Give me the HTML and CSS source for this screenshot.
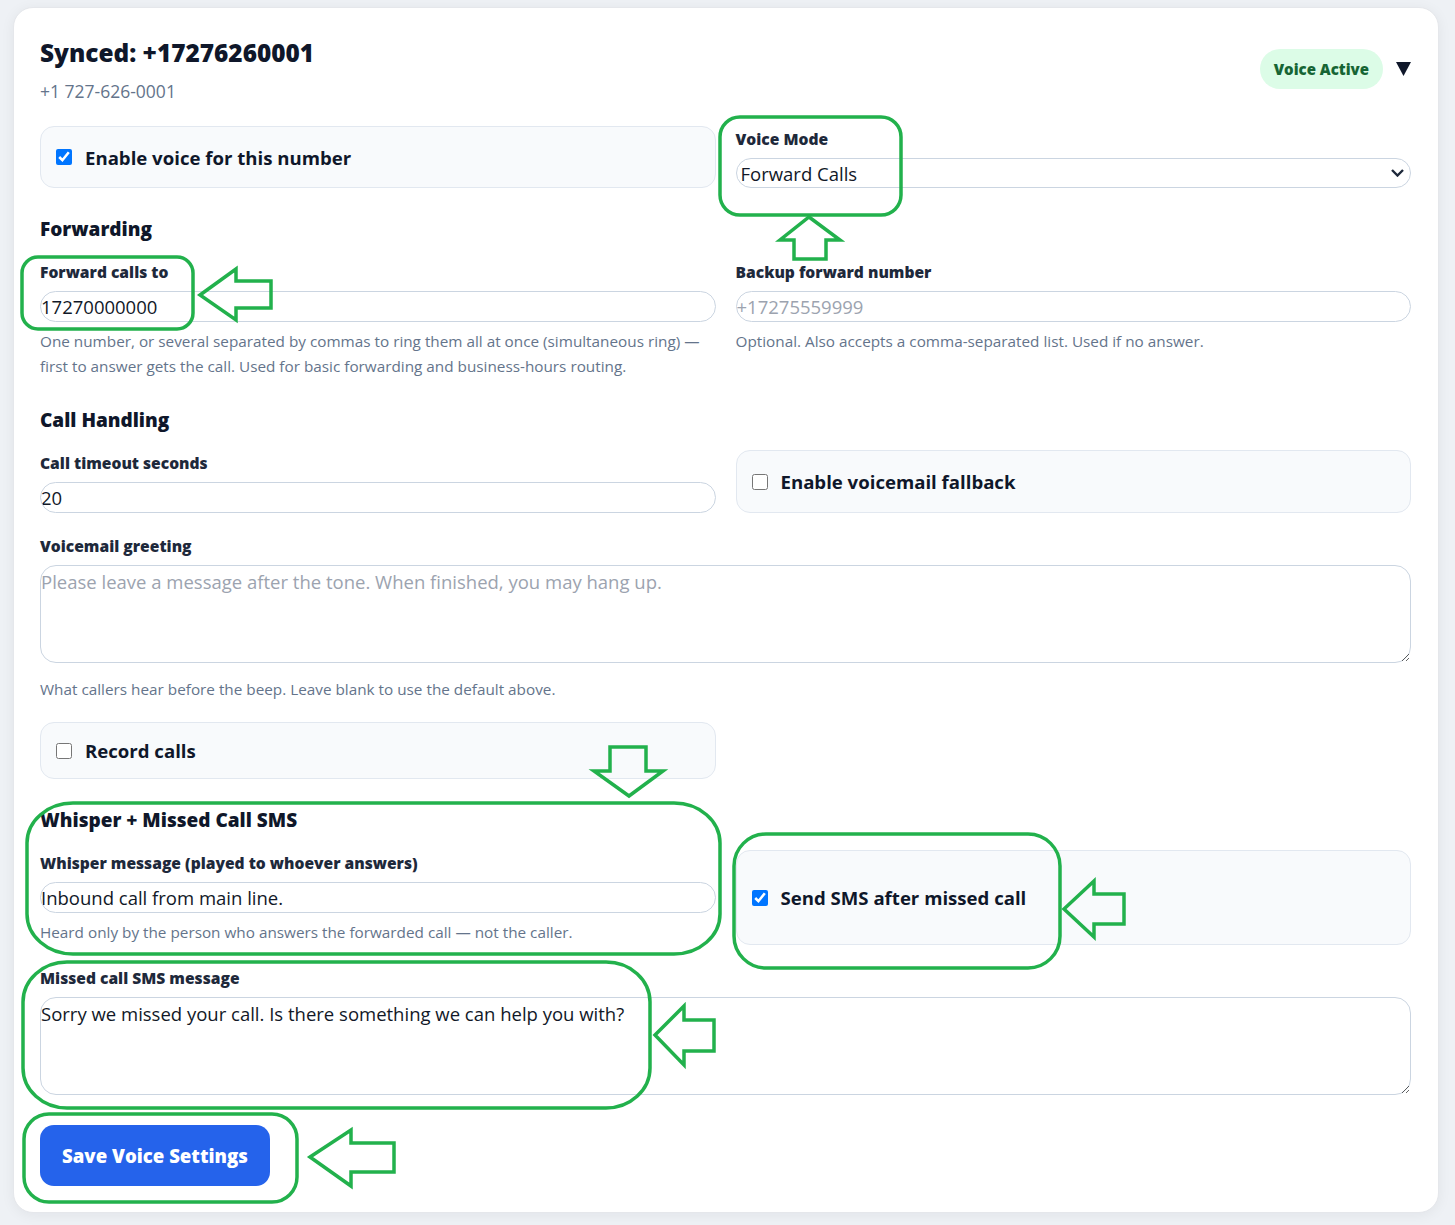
FILE: index.html
```html
<!DOCTYPE html>
<html lang="en"><head>
  <meta charset="utf-8">
  <title>Voice settings</title>
  <link rel="stylesheet" href="styles.css">
</head>
<body>

<div class="card">
  <div class="head">
    <div>
      <h2>Synced: +17276260001</h2>
      <div class="sub">+1 727-626-0001</div>
    </div>
    <div class="status">
      <span class="badge">Voice Active</span>
      <svg class="caret" width="15" height="14" viewBox="0 0 15 14"><polygon points="0,0 15,0 7.5,14"/></svg>
    </div>
  </div>

  <section class="sec first">
    <div class="row">
      <label class="check"><input type="checkbox" checked> Enable voice for this number</label>
      <div class="field">
        <label>Voice Mode</label>
        <div class="select">
          <select><option>Forward Calls</option><option>Voicemail Only</option></select>
          <svg width="13" height="8" viewBox="0 0 13 8"><polyline points="1,1 6.5,6.5 12,1"/></svg>
        </div>
      </div>
    </div>
  </section>

  <h3>Forwarding</h3>
  <section class="sec">
    <div class="row">
      <div class="field">
        <label>Forward calls to</label>
        <input type="text" value="17270000000">
        <p class="help">One number, or several separated by commas to ring them all at once (simultaneous ring) — first to answer gets the call. Used for basic forwarding and business-hours routing.</p>
      </div>
      <div class="field">
        <label>Backup forward number</label>
        <input type="text" placeholder="+17275559999">
        <p class="help">Optional. Also accepts a comma-separated list. Used if no answer.</p>
      </div>
    </div>
  </section>

  <h3>Call Handling</h3>
  <section class="sec">
    <div class="row">
      <div class="field">
        <label>Call timeout seconds</label>
        <input type="text" value="20">
      </div>
      <label class="check"><input type="checkbox"> Enable voicemail fallback</label>
    </div>
    <div class="field">
      <label>Voicemail greeting</label>
      <textarea placeholder="Please leave a message after the tone. When finished, you may hang up."></textarea>
      <p class="help">What callers hear before the beep. Leave blank to use the default above.</p>
    </div>
    <div class="row">
      <label class="check"><input type="checkbox"> Record calls</label>
    </div>
  </section>

  <h3>Whisper + Missed Call SMS</h3>
  <section class="sec">
    <div class="row">
      <div class="field">
        <label>Whisper message (played to whoever answers)</label>
        <input type="text" value="Inbound call from main line.">
        <p class="help">Heard only by the person who answers the forwarded call — not the caller.</p>
      </div>
      <label class="check"><input type="checkbox" checked> Send SMS after missed call</label>
    </div>
    <div class="field">
      <label>Missed call SMS message</label>
      <textarea>Sorry we missed your call. Is there something we can help you with?</textarea>
    </div>
  </section>

  <div class="actions">
    <button type="button" class="save">Save Voice Settings</button>
  </div>
</div>

<!-- review marks drawn over the page -->
<svg class="marks" width="1455" height="1225" viewBox="0 0 1455 1225">
  <rect x="720" y="117" width="181" height="98" rx="20"/>
  <polygon points="809,217 840,240 826,240 826,259 794,259 794,240 780,240"/>
  <rect x="22" y="257" width="171" height="72" rx="16"/>
  <polygon points="200,295 236,269 236,281 271,281 271,308 236,308 236,320"/>
  <polygon points="610,747 646,747 646,771 663,771 629,796 594,771 610,771"/>
  <rect x="27" y="803" width="693" height="151" rx="46" ry="40"/>
  <rect x="734" y="834" width="326" height="134" rx="32"/>
  <polygon points="1064,909 1094,881 1094,894 1124,894 1124,924 1094,924 1094,937"/>
  <rect x="23" y="962" width="627" height="146" rx="44" ry="40"/>
  <polygon points="655,1035 684,1006 684,1020 714,1020 714,1051 684,1051 684,1065"/>
  <rect x="24" y="1114" width="273" height="88" rx="25"/>
  <polygon points="310,1157 351,1130 351,1143 394,1143 394,1172 351,1172 351,1186"/>
</svg>

</body></html>
```

FILE: styles.css
```css
* { box-sizing: border-box; }

html, body { margin: 0; }

body {
  background: #eef1f5;
  color: #0f172a;
  font-family: "Open Sans", "Noto Sans", sans-serif;
  padding: 7px 16px 12px 13px;
}

.card {
  width: 1426px;
  background: #fff;
  border: 1px solid #e5e7eb;
  border-radius: 20px;
  box-shadow: 0 2px 14px rgba(15, 23, 42, .06);
  padding: 28px 27px 26px 26px;
}

.head {
  display: flex;
  justify-content: space-between;
  align-items: center;
}
h2 {
  margin: 0;
  font-size: 24.4px;
  font-weight: 800;
  line-height: 34px;
}
.sub {
  margin-top: 10px;
  font-size: 17.5px;
  line-height: 22px;
  color: #64748b;
}
.status {
  display: flex;
  align-items: center;
  gap: 13px;
}
.badge {
  background: #dcfce7;
  color: #166534;
  font-size: 15px;
  font-weight: 800;
  line-height: 40px;
  padding: 0 14px;
  border-radius: 20px;
}
.caret { fill: #0f172a; display: block; }

h3 {
  margin: 28px 0 17px;
  font-size: 19px;
  font-weight: 800;
  line-height: 26px;
}

.sec {
  display: grid;
  row-gap: 20px;
}
.sec.first { margin-top: 24px; }

.row {
  display: grid;
  grid-template-columns: 1fr 1fr;
  column-gap: 20px;
}

.field label {
  display: block;
  font-size: 15.6px;
  font-weight: 800;
  line-height: 26px;
  margin-bottom: 6px;
  color: #1e293b;
}

input[type=text], select, textarea {
  display: block;
  width: 100%;
  border: 1px solid #cbd5e1;
  border-radius: 16px;
  background: #fff;
  color: #111827;
  font-family: "Open Sans", "Noto Sans", sans-serif;
  font-size: 18.5px;
  outline: none;
}
input[type=text] {
  height: 31px;
  padding: 0;
}
input::placeholder, textarea::placeholder { color: #9ca3af; }

.select { position: relative; }
select {
  height: 30px;
  padding: 0 30px 0 4px;
  appearance: none;
  -webkit-appearance: none;
}
.select svg {
  position: absolute;
  right: 7px;
  top: 11px;
  fill: none;
  stroke: #1e293b;
  stroke-width: 2.4;
}

textarea {
  height: 98px;
  padding: 3px 0 0;
  line-height: 25px;
  resize: vertical;
}
.field textarea + .help { margin-top: 14px; }

.help {
  margin: 7px 0 0;
  font-size: 15.3px;
  line-height: 25px;
  color: #64748b;
}

.check {
  display: flex;
  align-items: center;
  gap: 13px;
  padding: 16px 15px;
  border: 1px solid #e2e8f0;
  border-radius: 14px;
  background: #f8fafc;
  font-size: 18.6px;
  font-weight: 700;
  line-height: 23px;
}
.check input {
  width: 16px;
  height: 16px;
  margin: 0;
}

.actions { margin-top: 30px; }
.save {
  background: #2563eb;
  color: #fff;
  border: 0;
  border-radius: 14px;
  padding: 18px 22px;
  font-family: "Open Sans", "Noto Sans", sans-serif;
  font-size: 18.6px;
  font-weight: 800;
  line-height: 25px;
}

.marks {
  position: absolute;
  top: 0;
  left: 0;
  pointer-events: none;
  fill: none;
  stroke: #22b14c;
  stroke-width: 3.5;
}
```
